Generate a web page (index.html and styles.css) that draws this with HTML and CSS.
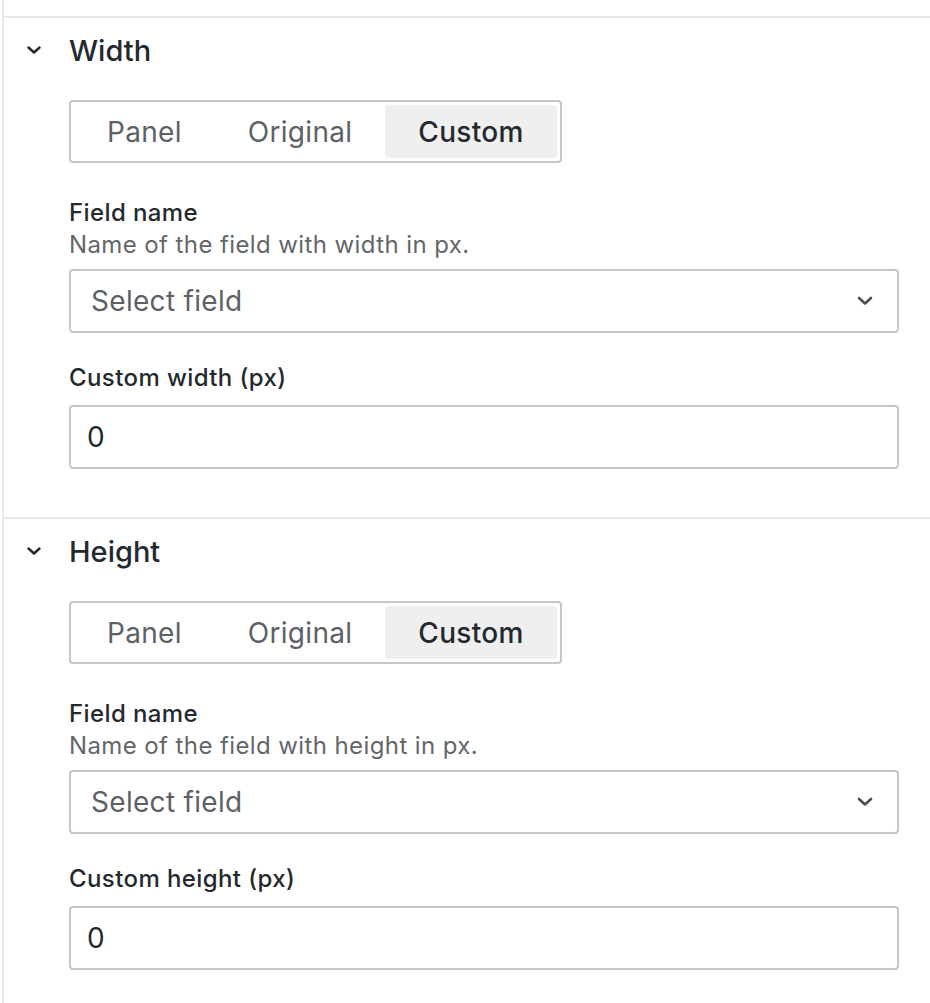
FILE: index.html
```html
<!DOCTYPE html>
<html>
<head>
<meta charset="utf-8">
<link rel="stylesheet" href="styles.css">
</head>
<body>
<div class="panel">
  <section class="group">
    <div class="group-header">
      <svg class="caret" width="14" height="8" viewBox="0 0 14 8"><path d="M1.5 1.5 L7 6.5 L12.5 1.5" fill="none" stroke="#24292e" stroke-width="2.4" stroke-linecap="round" stroke-linejoin="round"/></svg>
      <span class="group-title">Width</span>
    </div>
    <div class="group-body">
      <div class="segmented">
        <span class="seg">Panel</span>
        <span class="seg">Original</span>
        <span class="seg active">Custom</span>
      </div>
      <div class="field first">
        <div class="label">Field name</div>
        <div class="desc">Name of the field with width in px.</div>
        <div class="select">
          <span class="placeholder">Select field</span>
          <svg class="sel-caret" width="16" height="10" viewBox="0 0 16 10"><path d="M2 2 L8 7.5 L14 2" fill="none" stroke="#4b4f53" stroke-width="2.6" stroke-linecap="round" stroke-linejoin="round"/></svg>
        </div>
      </div>
      <div class="field second">
        <div class="label">Custom width (px)</div>
        <div class="input">0</div>
      </div>
    </div>
  </section>
  <section class="group">
    <div class="group-header">
      <svg class="caret" width="14" height="8" viewBox="0 0 14 8"><path d="M1.5 1.5 L7 6.5 L12.5 1.5" fill="none" stroke="#24292e" stroke-width="2.4" stroke-linecap="round" stroke-linejoin="round"/></svg>
      <span class="group-title">Height</span>
    </div>
    <div class="group-body">
      <div class="segmented">
        <span class="seg">Panel</span>
        <span class="seg">Original</span>
        <span class="seg active">Custom</span>
      </div>
      <div class="field first">
        <div class="label">Field name</div>
        <div class="desc">Name of the field with height in px.</div>
        <div class="select">
          <span class="placeholder">Select field</span>
          <svg class="sel-caret" width="16" height="10" viewBox="0 0 16 10"><path d="M2 2 L8 7.5 L14 2" fill="none" stroke="#4b4f53" stroke-width="2.6" stroke-linecap="round" stroke-linejoin="round"/></svg>
        </div>
      </div>
      <div class="field second">
        <div class="label">Custom height (px)</div>
        <div class="input">0</div>
      </div>
    </div>
  </section>
</div>
</body>
</html>
```
FILE: styles.css
```css
html, body {
  margin: 0;
  padding: 0;
  background: #ffffff;
}
body {
  font-family: Inter, "Noto Sans", "Liberation Sans", sans-serif;
  color: #24292e;
}
.panel {
  margin-left: 2px;
  border-left: 2px solid #e6e7e8;
  padding-top: 16px;
  min-height: 987px;
}
.group {
  border-top: 2px solid #e6e7e8;
}
.group-header {
  height: 66px;
  display: flex;
  align-items: center;
}
.caret {
  margin-left: 23px;
  margin-top: -2px;
}
.group-title {
  margin-left: 28px;
  font-size: 29px;
  font-weight: 500;
  line-height: 36px;
}
.group-body {
  padding: 16px 31px 48px 65px;
}
.segmented {
  display: inline-flex;
  height: 63px;
  box-sizing: border-box;
  border: 2px solid #c6c7c9;
  border-radius: 4px;
  padding: 3px;
}
.seg {
  display: flex;
  align-items: center;
  padding: 0 33px;
  font-size: 28px;
  letter-spacing: 0.3px;
  color: #5d6166;
  border-radius: 4px;
}
.seg.active {
  background: #efeff0;
  color: #24292e;
  font-weight: 500;
}
.field.first {
  margin-top: 35px;
}
.field.second {
  margin-top: 30px;
}
.label {
  font-size: 24px;
  font-weight: 500;
  line-height: 30px;
  letter-spacing: 0.4px;
  color: #24292e;
}
.desc {
  margin-top: 2px;
  font-size: 24px;
  line-height: 30px;
  letter-spacing: 0.4px;
  color: #63676b;
}
.select {
  margin-top: 9px;
  height: 64px;
  box-sizing: border-box;
  border: 2px solid #c6c7c9;
  border-radius: 4px;
  display: flex;
  align-items: center;
  justify-content: space-between;
  padding: 0 24px 0 20px;
}
.placeholder {
  font-size: 28px;
  letter-spacing: 0.3px;
  color: #5d6166;
}
.second .input {
  margin-top: 12px;
}
.input {
  height: 64px;
  box-sizing: border-box;
  border: 2px solid #c6c7c9;
  border-radius: 4px;
  display: flex;
  align-items: center;
  padding: 0 16px;
  font-size: 28px;
  color: #24292e;
}
```
